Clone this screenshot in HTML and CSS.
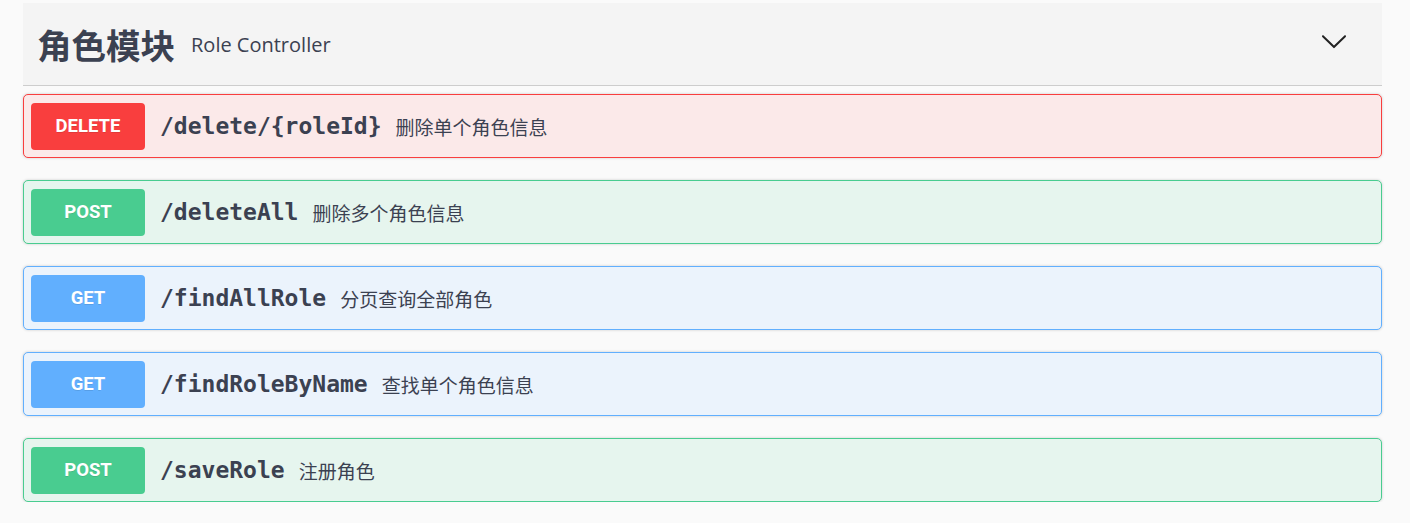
FILE: index.html
```html
<!DOCTYPE html>
<html lang="zh">
<head>
<meta charset="utf-8">
<title>角色模块</title>
<link rel="stylesheet" href="styles.css">
</head>
<body>
<section class="tag-section">
  <header class="tag-header">
    <h3 class="tag-title">角色模块</h3>
    <span class="tag-desc">Role Controller</span>
    <svg class="arrow" viewBox="0 0 20 20" width="28" height="28" aria-hidden="true">
      <path d="M17.418 6.109c.272-.268.709-.268.979 0s.271.701 0 .969l-7.908 7.83c-.27.268-.707.268-.979 0l-7.908-7.83c-.27-.268-.27-.701 0-.969.271-.268.709-.268.979 0L10 13.25l7.418-7.141z"/>
    </svg>
  </header>
  <div class="ops">
    <div class="opblock opblock-delete">
      <span class="method">DELETE</span>
      <span class="path">/delete/{roleId}</span>
      <span class="summary">删除单个角色信息</span>
    </div>
    <div class="opblock opblock-post">
      <span class="method">POST</span>
      <span class="path">/deleteAll</span>
      <span class="summary">删除多个角色信息</span>
    </div>
    <div class="opblock opblock-get">
      <span class="method">GET</span>
      <span class="path">/findAllRole</span>
      <span class="summary">分页查询全部角色</span>
    </div>
    <div class="opblock opblock-get">
      <span class="method">GET</span>
      <span class="path">/findRoleByName</span>
      <span class="summary">查找单个角色信息</span>
    </div>
    <div class="opblock opblock-post">
      <span class="method">POST</span>
      <span class="path">/saveRole</span>
      <span class="summary">注册角色</span>
    </div>
  </div>
</section>
</body>
</html>
```

FILE: styles.css
```css
html, body {
  margin: 0;
  background: #fafafa;
}
body {
  padding: 3px 28px 0 23px;
  font-family: "Open Sans", "Noto Sans CJK SC", sans-serif;
  color: #3b4151;
}
.tag-header {
  display: flex;
  align-items: center;
  height: 82px;
  padding: 0 34px 0 14px;
  background: #f4f4f4;
  border-bottom: 1px solid #cdcdcd;
}
.tag-title {
  margin: 0;
  font-family: "Noto Sans CJK SC", sans-serif;
  font-size: 34.5px;
  font-weight: 700;
  line-height: 1;
  color: #3b4151;
}
.tag-desc {
  margin-left: 16px;
  font-family: "Open Sans", sans-serif;
  font-size: 20px;
  color: #3b4151;
  flex: 1;
}
.arrow {
  margin-bottom: 6px;
  fill: #222;
}
.ops {
  display: flex;
  flex-direction: column;
  gap: 22px;
  margin-top: 8px;
}
.opblock {
  display: flex;
  align-items: center;
  height: 62px;
  padding: 0 7px;
  border: 1px solid;
  border-radius: 5px;
  box-shadow: 0 0 3px rgba(0, 0, 0, .19);
}
.method {
  width: 114px;
  height: 47px;
  border-radius: 4px;
  display: flex;
  align-items: center;
  justify-content: center;
  font-family: "Roboto", sans-serif;
  font-weight: 700;
  font-size: 18.5px;
  color: #fff;
  text-shadow: 0 1px 0 rgba(0, 0, 0, .1);
}
.path {
  padding: 0 14px 0 15px;
  font-family: "DejaVu Sans Mono", monospace;
  font-weight: 700;
  font-size: 23px;
  color: #3b4151;
}
.summary {
  font-family: "Noto Sans CJK SC", sans-serif;
  font-size: 19px;
  color: #3b4151;
}
.opblock-delete {
  background: #fbe9e9;
  border-color: #f93e3e;
}
.opblock-delete .method { background: #f93e3e; }
.opblock-post {
  background: #e6f5ee;
  border-color: #49cc90;
}
.opblock-post .method { background: #49cc90; }
.opblock-get {
  background: #ebf3fc;
  border-color: #61affe;
}
.opblock-get .method { background: #61affe; }
```
